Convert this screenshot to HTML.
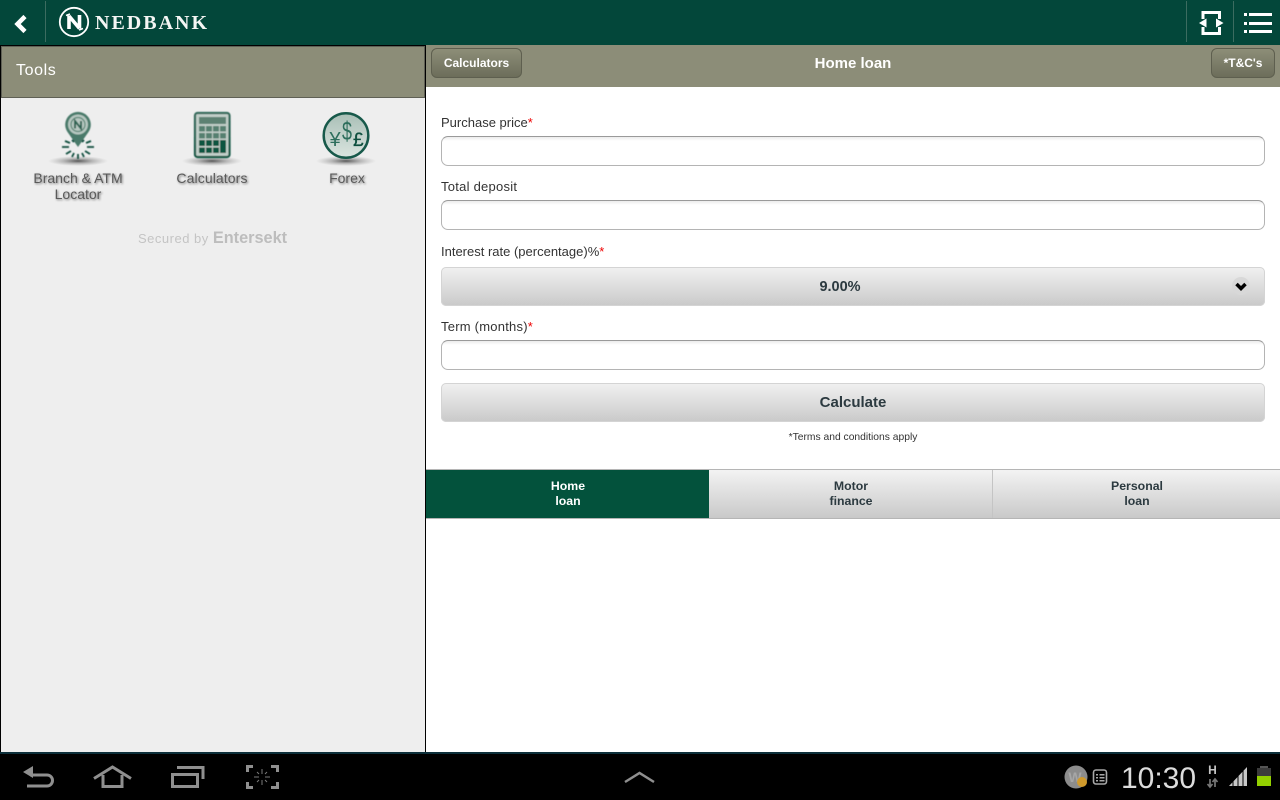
<!DOCTYPE html>
<html>
<head>
<meta charset="utf-8">
<style>
html,body{margin:0;padding:0;width:1280px;height:800px;overflow:hidden;background:#fff;font-family:"Liberation Sans",sans-serif;}
.a{position:absolute;}
.t{position:absolute;white-space:nowrap;}
.lbl{position:absolute;left:441px;font-size:13px;color:#333;white-space:nowrap;line-height:16px;}
.lbl b{color:#e00;font-weight:normal;}
.inp{position:absolute;left:441px;width:822px;height:28px;border:1px solid #b4b4b4;border-top-color:#9a9a9a;border-radius:7px;background:linear-gradient(#ececec,#fff 4px);}
.btn{position:absolute;left:441px;width:824px;height:39px;border-radius:5px;background:linear-gradient(#f1f1f1,#c9c9c9);box-shadow:inset 0 0 0 1px #d4d4d4;color:#2c3a40;font-weight:bold;text-align:center;}
.ic{position:absolute;text-align:center;font-size:14px;line-height:16px;color:#5a5a5a;text-shadow:1px 1px 2px rgba(0,0,0,.5);}
.hb{position:absolute;top:48px;height:28px;border:1px solid #5e5f4f;border-radius:6px;background:linear-gradient(#8d8e78,#6c6d5a);color:#fff;font-weight:bold;font-size:12px;line-height:28px;text-align:center;}
.tab{position:absolute;top:470px;height:48px;text-align:center;font-size:12.3px;line-height:15px;font-weight:bold;box-sizing:border-box;padding:9px 0 0 1px;}
</style>
</head>
<body>
<div class="a" style="left:0;top:0;width:1280px;height:45px;background:#03473a;"></div>
<svg class="a" style="left:0;top:0" width="1280" height="45">
<path d="M25 16.500 L17.500 24 L25 31.500" fill="none" stroke="#fff" stroke-width="4.500"/>
<rect x="45" y="1" width="1" height="41" fill="#3c6c60"/>
<circle cx="74" cy="22" r="14.200" fill="none" stroke="#fff" stroke-width="1.800"/>
<path d="M69 15.500 V29 M79.500 15 V28.500 M69 16 L79.500 28.500" fill="none" stroke="#fff" stroke-width="3.600"/>
<path d="M66 15.500 L70 14 M83 28.500 L79 30" stroke="#fff" stroke-width="1.600" fill="none"/>
<rect x="1186" y="1" width="1" height="41" fill="#3c6c60"/>
<rect x="1233" y="1" width="1" height="41" fill="#3c6c60"/>
<path d="M1203 19 V12.500 H1219.500 V19 M1203 27 V33.500 H1219.500 V27" fill="none" stroke="#fff" stroke-width="3"/>
<path d="M1206.500 18.500 L1199 23 L1206.500 27.500 Z M1216 18.500 L1223.500 23 L1216 27.500 Z" fill="#fff"/>
<path d="M1244 13h3v3h-3z M1249 13h23v3h-23z M1244 22h3v3h-3z M1249 22h23v3h-23z M1244 30h3v3h-3z M1249 30h23v3h-23z" fill="#fff"/>
</svg>
<div class="t" style="left:95px;top:12px;font-family:'Liberation Serif',serif;font-weight:bold;font-size:20px;line-height:22px;color:#f4f6f4;letter-spacing:2px;">NEDBANK</div>

<div class="a" style="left:0;top:45px;width:426px;height:708px;background:#000;"></div>
<div class="a" style="left:1px;top:46px;width:424px;height:706px;background:#eee;"></div>
<div class="a" style="left:1px;top:46px;width:424px;height:52px;box-sizing:border-box;background:#8c8d78;border:1px solid #5f6055;"></div>
<div class="t" style="left:16px;top:61px;font-size:16px;line-height:19px;color:#fff;letter-spacing:.6px;">Tools</div>

<svg class="a" style="left:0;top:100px" width="426" height="75">
<defs>
<radialGradient id="s"><stop offset="0" stop-color="#333" stop-opacity=".8"/><stop offset=".5" stop-color="#555" stop-opacity=".35"/><stop offset="1" stop-color="#777" stop-opacity="0"/></radialGradient>
<linearGradient id="g1" x1="0" y1="0" x2="0" y2="1"><stop offset="0" stop-color="#a9bfb6"/><stop offset="1" stop-color="#dbe5e0"/></linearGradient>
<linearGradient id="g2" x1="0" y1="0" x2="0" y2="1"><stop offset="0" stop-color="#33695a"/><stop offset="1" stop-color="#0f5441"/></linearGradient>
<filter id="b"><feGaussianBlur stdDeviation="0.400"/></filter>
</defs>
<ellipse cx="78" cy="61" rx="30" ry="5" fill="url(#s)"/>
<ellipse cx="212" cy="61" rx="30" ry="5" fill="url(#s)"/>
<ellipse cx="346" cy="61" rx="30" ry="5" fill="url(#s)"/>
<g filter="url(#b)">
<path d="M78 47 L67.500 32 A12.800 12.800 0 1 1 88.500 32 Z" fill="#4a7a6a"/>
<circle cx="78" cy="24.500" r="10" fill="#b7c8c1"/>
<circle cx="78" cy="24.500" r="7" fill="none" stroke="#5a8575" stroke-width="1.200"/>
<path d="M75 28.500 V21 L81 28.500 V21" fill="none" stroke="#2f6353" stroke-width="2"/>
<path d="M62 47h7 M87 47h7 M65 41l5 2 M91 41l-5 2 M66 54l5-3 M90 54l-5-3 M72 57l2-4 M84 57l-2-4 M78 59v-5 M72 40l2 2 M84 40l-2 2" stroke="#0c4d3c" stroke-width="1.800" fill="none"/>
</g>
<g filter="url(#b)">
<rect x="195" y="13" width="34.500" height="44" rx="2.500" fill="#c2cfc9" stroke="url(#g2)" stroke-width="2.200"/>
<rect x="199" y="17" width="27" height="7" fill="#5c8172"/>
<g fill="#55806f">
<rect x="199" y="26" width="6" height="5.500"/><rect x="206" y="26" width="6" height="5.500"/><rect x="213" y="26" width="6" height="5.500"/><rect x="220" y="26" width="6" height="5.500"/>
<rect x="199" y="33" width="6" height="5.500"/><rect x="206" y="33" width="6" height="5.500"/><rect x="213" y="33" width="6" height="5.500"/><rect x="220" y="33" width="6" height="5.500"/>
</g>
<g fill="#0f5441">
<rect x="199" y="40" width="6" height="6"/><rect x="206" y="40" width="6" height="6"/><rect x="213" y="40" width="6" height="6"/><rect x="220" y="40" width="6" height="13"/>
<rect x="199" y="47.500" width="6" height="5.500"/><rect x="206" y="47.500" width="6" height="5.500"/><rect x="213" y="47.500" width="6" height="5.500"/>
</g>
</g>
<circle cx="346" cy="35.500" r="22.300" fill="url(#g1)" stroke="#17594a" stroke-width="2.500"/>
<text x="335" y="46" font-size="20" font-family="Liberation Sans" fill="#2d6e5c" text-anchor="middle">¥</text>
<text x="342" y="40" font-size="26" font-family="Liberation Sans" fill="#2d6e5c" textLength="10" lengthAdjust="spacingAndGlyphs">$</text>
<text x="353" y="46" font-size="19" font-family="Liberation Sans" fill="#0e4f3e" stroke="#0e4f3e" stroke-width=".3">£</text>
</svg>

<div class="ic" style="left:18px;top:170px;width:120px;">Branch &amp; ATM<br>Locator</div>
<div class="ic" style="left:152px;top:170px;width:120px;letter-spacing:.1px;">Calculators</div>
<div class="ic" style="left:287px;top:170px;width:120px;">Forex</div>
<div class="t" style="left:138px;top:231px;font-size:13px;line-height:15px;color:#c4c4c4;letter-spacing:.5px;">Secured by <b style="font-size:16.300px;color:#bdbdbd;letter-spacing:0;">Entersekt</b></div>

<div class="a" style="left:426px;top:45px;width:854px;height:42px;background:#8c8d78;"></div>
<div class="hb" style="left:431px;width:89px;">Calculators</div>
<div class="hb" style="left:1211px;width:62px;">*T&amp;C's</div>
<div class="t" style="left:426px;width:854px;top:55px;text-align:center;font-size:15px;line-height:18px;font-weight:bold;color:#fff;">Home loan</div>

<div class="lbl" style="top:115px;">Purchase price<b>*</b></div>
<div class="inp" style="top:136px;"></div>
<div class="lbl" style="top:179px;letter-spacing:.25px;">Total deposit</div>
<div class="inp" style="top:200px;"></div>
<div class="lbl" style="top:244px;">Interest rate (percentage)%<b>*</b></div>
<div class="btn" style="top:267px;font-size:14.500px;line-height:40px;"><span style="position:relative;left:-13px">9.00%</span></div>
<div class="a" style="left:1232px;top:277px;width:18px;height:18px;border-radius:9px;background:#d8d8d8;"></div>
<svg class="a" style="left:1232px;top:277px" width="18" height="18"><path d="M4.500 7 L9 11.500 L13.500 7" fill="none" stroke="#000" stroke-width="3.500"/></svg>
<div class="lbl" style="top:319px;letter-spacing:.23px;">Term (months)<b>*</b></div>
<div class="inp" style="top:340px;"></div>
<div class="btn" style="top:383px;font-size:15px;line-height:39px;">Calculate</div>
<div class="t" style="left:426px;width:854px;top:431px;text-align:center;font-size:10.300px;line-height:13px;color:#333;">*Terms and conditions apply</div>

<div class="a" style="left:426px;top:469px;width:854px;height:50px;box-sizing:border-box;border-top:1px solid #b5b5b5;border-bottom:1px solid #b5b5b5;"></div>
<div class="tab" style="left:426px;width:283px;background:#03523c;color:#fff;">Home<br>loan</div>
<div class="tab" style="left:709px;width:284px;background:linear-gradient(#f3f3f3,#c9c9c9);color:#2c3a40;border-right:1px solid #c4c4c4;">Motor<br>finance</div>
<div class="tab" style="left:993px;width:287px;background:linear-gradient(#f3f3f3,#c9c9c9);color:#2c3a40;">Personal<br>loan</div>

<div class="a" style="left:0;top:752px;width:1280px;height:48px;background:#000;"></div>
<div class="a" style="left:0;top:752px;width:1280px;height:2px;background:#0c2f3a;"></div>
<svg class="a" style="left:0;top:754px" width="1280" height="46">
<g fill="none" stroke="#8f8f8f" stroke-width="3">
<path d="M30 21 H47 A5.500 5.500 0 0 1 47 32 H27"/>
<path d="M94 24.500 L112.500 13 L131 24.500"/>
<path d="M103 21 V32.500 H122 V21"/>
<rect x="172.500" y="20.500" width="25" height="12"/>
<path d="M177 13.500 H203 V25"/>
<path d="M247.500 18V12.500H253 M271 12.500H277.500V18 M247.500 28V33.500H253 M271 33.500H277.500V28"/>
</g>
<path d="M23 18 L33 12 V24 Z" fill="#8f8f8f"/>
<path d="M262 15v5 M262 26v5 M254 23h5 M265 23h5 M257 18l2 2 M267 18l-2 2 M257 28l2-2 M267 28l-2-2" stroke="#7a7a7a" stroke-width="1"/>
<path d="M625 28 L639.500 19 L654 28" fill="none" stroke="#8f8f8f" stroke-width="2.500"/>
<circle cx="1076" cy="23" r="11.500" fill="#8c8c8c"/>
<text x="1075" y="28" font-size="14" font-weight="bold" font-family="Liberation Sans" fill="#a6a6a6" text-anchor="middle">W</text>
<circle cx="1082" cy="28" r="5" fill="#d09a2c"/>
<rect x="1093.500" y="16" width="13" height="14" rx="2.500" fill="none" stroke="#a8a8a8" stroke-width="1.600"/>
<path d="M1096 20h2v1.500h-2z M1099.500 20h5v1.500h-5z M1096 23h2v1.500h-2z M1099.500 23h5v1.500h-5z M1096 26h2v1.500h-2z M1099.500 26h5v1.500h-5z" fill="#a8a8a8"/>
<text x="1158.500" y="34" font-size="30" font-family="Liberation Sans" fill="#dcdcdc" text-anchor="middle">10:30</text>
<text x="1212.500" y="20" font-size="12" font-weight="bold" font-family="Liberation Sans" fill="#c4c4c4" text-anchor="middle">H</text>
<path d="M1210 25v8 M1207.500 30l2.500 3 2.500-3 M1215 33v-8 M1212.500 28l2.500-3 2.500 3" fill="none" stroke="#777" stroke-width="1.700"/>
<path d="M1229 32 L1247 13 V32 Z" fill="#c8c8c8"/>
<path d="M1233 32V12 M1238 32V12 M1243 32V12" stroke="#000" stroke-width="1"/>
<rect x="1260" y="12" width="8" height="2" fill="#555"/>
<rect x="1257" y="14" width="14" height="8" fill="#3c3c3c"/>
<rect x="1257" y="22" width="14" height="10" fill="#93d000"/>
</svg>
</body>
</html>
